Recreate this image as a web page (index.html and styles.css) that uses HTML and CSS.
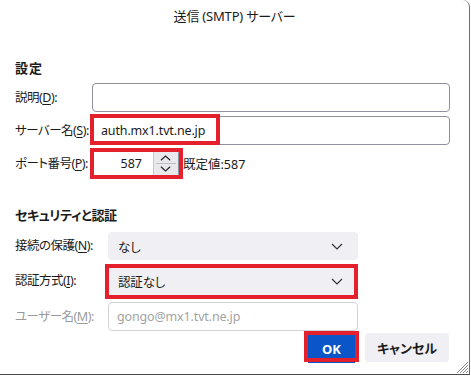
FILE: index.html
```html
<!DOCTYPE html>
<html lang="ja">
<head>
<meta charset="utf-8">
<title>送信 (SMTP) サーバー</title>
<link rel="stylesheet" href="styles.css">
</head>
<body>
<div class="win">
  <header class="title">送信 (SMTP) サーバー</header>

  <section class="group">
    <h2 class="heading h-first">設定</h2>
    <div class="form form-a">
      <label class="lbl">説明(<u>D</u>):</label>
      <div class="field text-field"></div>

      <label class="lbl">サーバー名(<u>S</u>):</label>
      <div class="field text-field">
        <span class="val">auth.mx1.tvt.ne.jp</span>
        <span class="mark mark-server"></span>
      </div>

      <label class="lbl">ポート番号(<u>P</u>):</label>
      <div class="port-row">
        <div class="field port-field">
          <span class="port-val">587</span>
          <span class="spin">
            <svg width="26" height="27" viewBox="0 0 26 27">
              <path d="M7.5 10 L12.5 5.5 L17.5 10" fill="none" stroke="#222" stroke-width="1.2"/>
              <line x1="2" y1="13.5" x2="24" y2="13.5" stroke="#b8b8c0" stroke-width="1"/>
              <path d="M7.5 17 L12.5 21.5 L17.5 17" fill="none" stroke="#222" stroke-width="1.2"/>
            </svg>
          </span>
          <span class="mark mark-port"></span>
        </div>
        <span class="default">既定値:587</span>
      </div>
    </div>
  </section>

  <section class="group">
    <h2 class="heading h-second">セキュリティと認証</h2>
    <div class="form form-b">
      <label class="lbl">接続の保護(<u>N</u>):</label>
      <div class="field select">
        <span class="val">なし</span>
        <svg class="chev" width="12" height="7" viewBox="0 0 12 7"><path d="M1 1 L6 6 L11 1" fill="none" stroke="#333" stroke-width="1.2"/></svg>
      </div>

      <label class="lbl">認証方式(<u>I</u>):</label>
      <div class="field select">
        <span class="val">認証なし</span>
        <svg class="chev" width="12" height="7" viewBox="0 0 12 7"><path d="M1 1 L6 6 L11 1" fill="none" stroke="#333" stroke-width="1.2"/></svg>
        <span class="mark mark-auth"></span>
      </div>

      <label class="lbl lbl-dis">ユーザー名(<u>M</u>):</label>
      <div class="field text-field dis">
        <span class="val">gongo@mx1.tvt.ne.jp</span>
      </div>
    </div>
  </section>

  <footer class="buttons">
    <button class="btn btn-ok">OK<span class="mark mark-ok"></span></button>
    <button class="btn btn-cancel">キャンセル</button>
  </footer>

  <svg class="grip" width="14" height="14" viewBox="0 0 14 14">
    <path d="M13 2 L2 13 M13 5 L5 13 M13 8 L8 13 M13 11 L11 13" stroke="#888" stroke-width="1"/>
  </svg>
</div>
</body>
</html>
```

FILE: styles.css
```css
* { box-sizing: border-box; }

html, body {
  margin: 0;
  padding: 0;
  background: #ffffff;
}

body {
  font-family: "Noto Sans", "Noto Sans CJK JP", sans-serif;
  font-feature-settings: "palt";
  color: #1b1b1b;
  font-size: 12.5px;
}

.win {
  position: relative;
  width: 470px;
  height: 375px;
  background: #ffffff;
  border-right: 1px solid #6e6e6e;
  border-bottom: 1px solid #4a4a4a;
  border-top-right-radius: 7px;
  padding: 0 20px 0 15px;
}

.title {
  height: 32px;
  line-height: 32px;
  text-align: center;
  font-size: 13px;
  letter-spacing: -0.2px;
  padding-left: 5px;
}

.heading {
  margin: 0;
  font-size: 13px;
  font-weight: 700;
  line-height: 20px;
  height: 20px;
}

.h-first { margin-top: 26px; margin-bottom: 5px; letter-spacing: 1px; }
.h-second { margin-top: 27px; margin-bottom: 7px; letter-spacing: -0.4px; }

.form {
  display: grid;
  align-items: center;
}

.form-a {
  grid-template-columns: 77px 358px;
  row-gap: 4px;
}

.form-b {
  grid-template-columns: 93px 250px;
  row-gap: 7px;
}

.lbl {
  font-size: 12.5px;
  letter-spacing: -0.5px;
  line-height: 20px;
  white-space: nowrap;
}

.lbl u { text-underline-offset: 2px; }

.lbl-dis { color: #9a9a9a; }

.field {
  position: relative;
  height: 29px;
  border-radius: 4px;
  display: flex;
  align-items: center;
  font-size: 12.5px;
}

.val { letter-spacing: -0.15px; }

.text-field {
  border: 1px solid #8f8f9d;
  background: #fff;
  padding-left: 8px;
}

.text-field.dis {
  border-color: #d2d2d8;
  color: #a3a3a3;
}

.port-row {
  display: flex;
  align-items: center;
  gap: 4px;
}

.port-field {
  width: 87px;
  border: 1px solid #8f8f9d;
  padding: 0;
}

.port-val {
  flex: 1;
  text-align: right;
  padding-right: 11px;
}

.spin {
  width: 25px;
  height: 27px;
  background: #e9e9ed;
  border-left: 1px solid #c8c8d0;
  border-radius: 0 3px 3px 0;
  display: flex;
}

.default {
  font-size: 12.5px;
}

.select {
  background: #f0f0f4;
  padding: 0 15px 0 10px;
  justify-content: space-between;
  height: 28px;
}

.chev { display: block; }

.mark {
  position: absolute;
  border: 4px solid #e3202b;
  pointer-events: none;
}

.mark-server { left: -3px; top: -3px; width: 130px; height: 31px; }
.mark-port { left: -3px; top: -2px; width: 93px; height: 31px; }
.mark-auth { left: -3px; top: -3px; width: 253px; height: 35px; }
.mark-ok { left: -4px; top: -3px; width: 55px; height: 31px; }

.buttons {
  display: flex;
  justify-content: flex-end;
  gap: 10px;
  margin-top: 2px;
  padding-right: 0;
}

.btn {
  position: relative;
  height: 29px;
  border: none;
  border-radius: 4px;
  font-family: inherit;
  font-feature-settings: "palt";
  font-size: 13px;
  font-weight: 700;
  padding: 0;
}

.btn-ok {
  width: 47px;
  background: #0a55c8;
  color: #fff;
  border-radius: 0;
  margin-top: 1px;
}

.btn-cancel {
  width: 84px;
  background: #f0f0f4;
  color: #1b1b1b;
}

.grip {
  position: absolute;
  right: 0;
  bottom: 0;
}
```
